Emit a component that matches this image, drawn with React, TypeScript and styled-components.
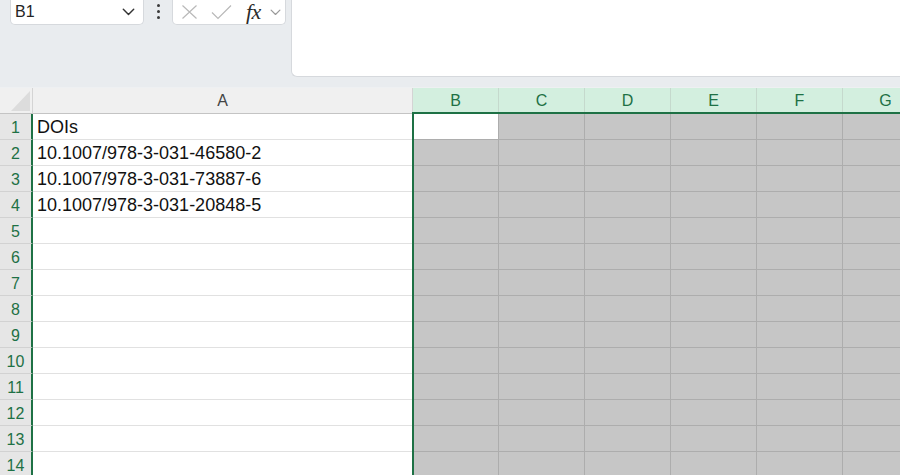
import React from "react";
import styled, { createGlobalStyle } from "styled-components";

const GlobalStyle = createGlobalStyle`
  html, body {
    margin: 0;
    padding: 0;
    width: 900px;
    height: 475px;
    overflow: hidden;
    background: #ffffff;
    font-family: "Liberation Sans", Arial, sans-serif;
  }
`;

const GREEN = "#1e7145";
const COLS = ["A", "B", "C", "D", "E", "F", "G"];
const DATA = [
  "DOIs",
  "10.1007/978-3-031-46580-2",
  "10.1007/978-3-031-73887-6",
  "10.1007/978-3-031-20848-5",
];
const ROWS = 14;

const Page = styled.div`
  display: flex;
  flex-direction: column;
  width: 900px;
  height: 475px;
  overflow: hidden;
`;

const Toolbar = styled.div`
  display: flex;
  align-items: flex-start;
  height: 87px;
  padding-left: 10px;
  background: #e9ecef;
  border-bottom: 1px solid #eef0f2;
  flex: none;
`;

const NameBox = styled.div`
  box-sizing: border-box;
  display: flex;
  align-items: center;
  justify-content: space-between;
  width: 134px;
  height: 25px;
  padding: 0 8px 0 4px;
  background: #ffffff;
  border: 1px solid #d6d9dd;
  border-top: none;
  border-radius: 0 0 5px 5px;
  font-size: 16px;
  color: #242424;
`;

const Dots = styled.div`
  display: flex;
  flex-direction: column;
  gap: 3px;
  margin: 4px 12px 0 13px;
  span {
    width: 3px;
    height: 3px;
    border-radius: 50%;
    background: #3a3a3a;
  }
`;

const FormulaButtons = styled.div`
  box-sizing: border-box;
  display: flex;
  align-items: center;
  width: 114px;
  height: 25px;
  padding: 0 0 0 8px;
  background: #ffffff;
  border: 1px solid #d6d9dd;
  border-top: none;
  border-radius: 0 0 5px 5px;
`;

const Fx = styled.span`
  font-family: "Liberation Serif", "Times New Roman", serif;
  font-style: italic;
  font-size: 22px;
  line-height: 22px;
  color: #2b2b2b;
  margin: 0 9px 0 14px;
  letter-spacing: -0.5px;
`;

const FormulaBar = styled.div`
  box-sizing: border-box;
  flex: 1;
  height: 77px;
  margin-left: 5px;
  background: #ffffff;
  border: 1px solid #d6d9dd;
  border-top: none;
  border-right: none;
  border-radius: 0 0 0 6px;
`;

const SheetWrap = styled.div`
  position: relative;
  flex: 1;
`;

const Sheet = styled.div`
  display: grid;
  grid-template-columns: 33px 380px repeat(6, 86px);
  grid-template-rows: 26px;
  grid-auto-rows: 26px;
`;

const Corner = styled.div`
  box-sizing: border-box;
  position: relative;
  background: #f0f0f0;
  border-right: 1px solid #d4d4d4;
  border-bottom: 1px solid #c4c4c4;
  &::after {
    content: "";
    position: absolute;
    right: 2px;
    bottom: 2px;
    width: 0;
    height: 0;
    border-left: 19px solid transparent;
    border-bottom: 20px solid #dcdcdc;
  }
`;

const ColHead = styled.div<{ $sel: boolean }>`
  box-sizing: border-box;
  display: flex;
  align-items: center;
  justify-content: center;
  padding-top: 1px;
  font-size: 16px;
  background: ${(p) => (p.$sel ? "#d3efdf" : "#f0f0f0")};
  color: ${(p) => (p.$sel ? GREEN : "#444444")};
  border-right: 1px solid ${(p) => (p.$sel ? "#c5d9cd" : "#d4d4d4")};
  border-bottom: ${(p) => (p.$sel ? `2px solid ${GREEN}` : "1px solid #c4c4c4")};
`;

const RowHead = styled.div`
  box-sizing: border-box;
  display: flex;
  align-items: center;
  justify-content: center;
  font-size: 16px;
  padding-top: 2px;
  background: #e6e6e6;
  color: ${GREEN};
  border-right: 2px solid ${GREEN};
  border-bottom: 1px solid #d2d2d2;
`;

const Cell = styled.div<{ $sel: boolean; $active: boolean }>`
  box-sizing: border-box;
  display: flex;
  align-items: center;
  padding: 2px 0 0 4px;
  font-size: 18px;
  color: #111111;
  white-space: nowrap;
  overflow: hidden;
  background: ${(p) => (p.$sel && !p.$active ? "#c6c6c6" : "#ffffff")};
  border-right: 1px solid ${(p) => (p.$sel ? "#adadad" : "#e1e1e1")};
  border-bottom: 1px solid ${(p) => (p.$sel ? "#adadad" : "#e1e1e1")};
`;

const Selection = styled.div`
  position: absolute;
  left: 412px;
  top: 24px;
  right: -10px;
  bottom: -10px;
  border-left: 2px solid ${GREEN};
  border-top: 2px solid ${GREEN};
  pointer-events: none;
`;

const Chevron = ({ size, color }: { size: number; color: string }) => (
  <svg width={size} height={size * 0.6} viewBox="0 0 10 6" fill="none">
    <path d="M1 1l4 4 4-4" stroke={color} strokeWidth="1.1" strokeLinecap="round" strokeLinejoin="round" />
  </svg>
);

export default function App() {
  return (
    <Page>
      <GlobalStyle />
      <Toolbar>
        <NameBox>
          <span>B1</span>
          <Chevron size={13} color="#333333" />
        </NameBox>
        <Dots>
          <span />
          <span />
          <span />
        </Dots>
        <FormulaButtons>
          <svg width="17" height="16" viewBox="0 0 17 16">
            <path d="M1.5 1.5l14 13M15.5 1.5l-14 13" stroke="#b9b9b9" strokeWidth="1.2" />
          </svg>
          <svg width="21" height="16" viewBox="0 0 21 16" style={{ marginLeft: 13 }}>
            <path d="M1 8.5l6 6 13-13" stroke="#b9b9b9" strokeWidth="1.2" fill="none" />
          </svg>
          <Fx>fx</Fx>
          <Chevron size={11} color="#9a9a9a" />
        </FormulaButtons>
        <FormulaBar />
      </Toolbar>
      <SheetWrap>
        <Sheet>
          <Corner />
          {COLS.map((c) => (
            <ColHead key={c} $sel={c !== "A"}>
              {c}
            </ColHead>
          ))}
          {Array.from({ length: ROWS }, (_, r) => (
            <React.Fragment key={r}>
              <RowHead>{r + 1}</RowHead>
              {COLS.map((c) => (
                <Cell key={c} $sel={c !== "A"} $active={c === "B" && r === 0}>
                  {c === "A" ? DATA[r] ?? "" : ""}
                </Cell>
              ))}
            </React.Fragment>
          ))}
        </Sheet>
        <Selection />
      </SheetWrap>
    </Page>
  );
}
